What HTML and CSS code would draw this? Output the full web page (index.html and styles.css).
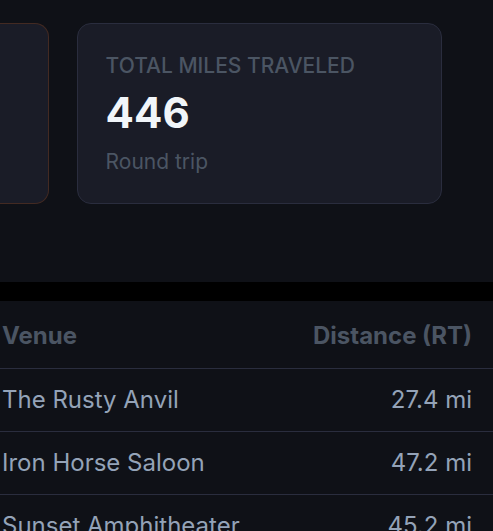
FILE: index.html
```
<!DOCTYPE html>
<html lang="en">
<head>
<meta charset="utf-8">
<title>Travel summary</title>
<link rel="stylesheet" href="styles.css">
</head>
<body>
<section class="summary">
  <div class="card card-accent"></div>
  <div class="card card-miles">
    <div class="card-label">TOTAL MILES TRAVELED</div>
    <div class="card-value">446</div>
    <div class="card-note">Round trip</div>
  </div>
</section>
<section class="trips">
  <table class="trip-table">
    <thead>
      <tr><th scope="col">Venue</th><th scope="col" class="distance">Distance (RT)</th></tr>
    </thead>
    <tbody>
      <tr><td>The Rusty Anvil</td><td class="distance">27.4 mi</td></tr>
      <tr><td>Iron Horse Saloon</td><td class="distance">47.2 mi</td></tr>
      <tr><td>Sunset Amphitheater</td><td class="distance">45.2 mi</td></tr>
    </tbody>
  </table>
</section>
</body>
</html>
```
FILE: styles.css
```
* {
  box-sizing: border-box;
}

html {
  height: 100%;
  overflow: hidden;
  background: #000;
}

body {
  display: flex;
  flex-direction: column;
  gap: 19px;
  height: 100%;
  margin: 0;
  overflow: hidden;
  font-family: Inter, "Liberation Sans", sans-serif;
  color: #94a3b8;
}

.summary {
  display: flex;
  flex-shrink: 0;
  gap: 28px;
  padding: 23px 51px 78px 0;
  background: #0f1117;
}

.card {
  padding: 28px;
  border: 1px solid #2a2d3e;
  border-radius: 14px;
  background: #1a1c27;
}

.card-accent {
  flex: 0 0 11%;
  padding: 28px 0;
  border-color: #432a22;
  border-left: 0;
  border-radius: 0 14px 14px 0;
}

.card-miles {
  flex: 1;
}

.card-label {
  font-size: 21px;
  font-weight: 500;
  line-height: 28px;
  color: #4b5563;
}

.card-value {
  padding: 8px 0 12px;
  font-size: 42px;
  font-weight: 700;
  line-height: 49px;
  color: #f1f5f9;
}

.card-note {
  font-size: 21px;
  line-height: 26px;
  color: #4b5563;
}

.trips {
  flex: 1 0 auto;
  background: #0f1117;
}

.trip-table {
  width: 100%;
  border-collapse: collapse;
  font-size: 24px;
  line-height: 30px;
}

.trip-table th,
.trip-table td {
  padding: 16px 21px 16px 2px;
  border-bottom: 1px solid #2a2d3e;
  text-align: left;
}

.trip-table th {
  padding-top: 20px;
  padding-bottom: 17px;
  font-weight: 700;
  color: #4b5563;
}

.trip-table .distance {
  text-align: right;
}
```
